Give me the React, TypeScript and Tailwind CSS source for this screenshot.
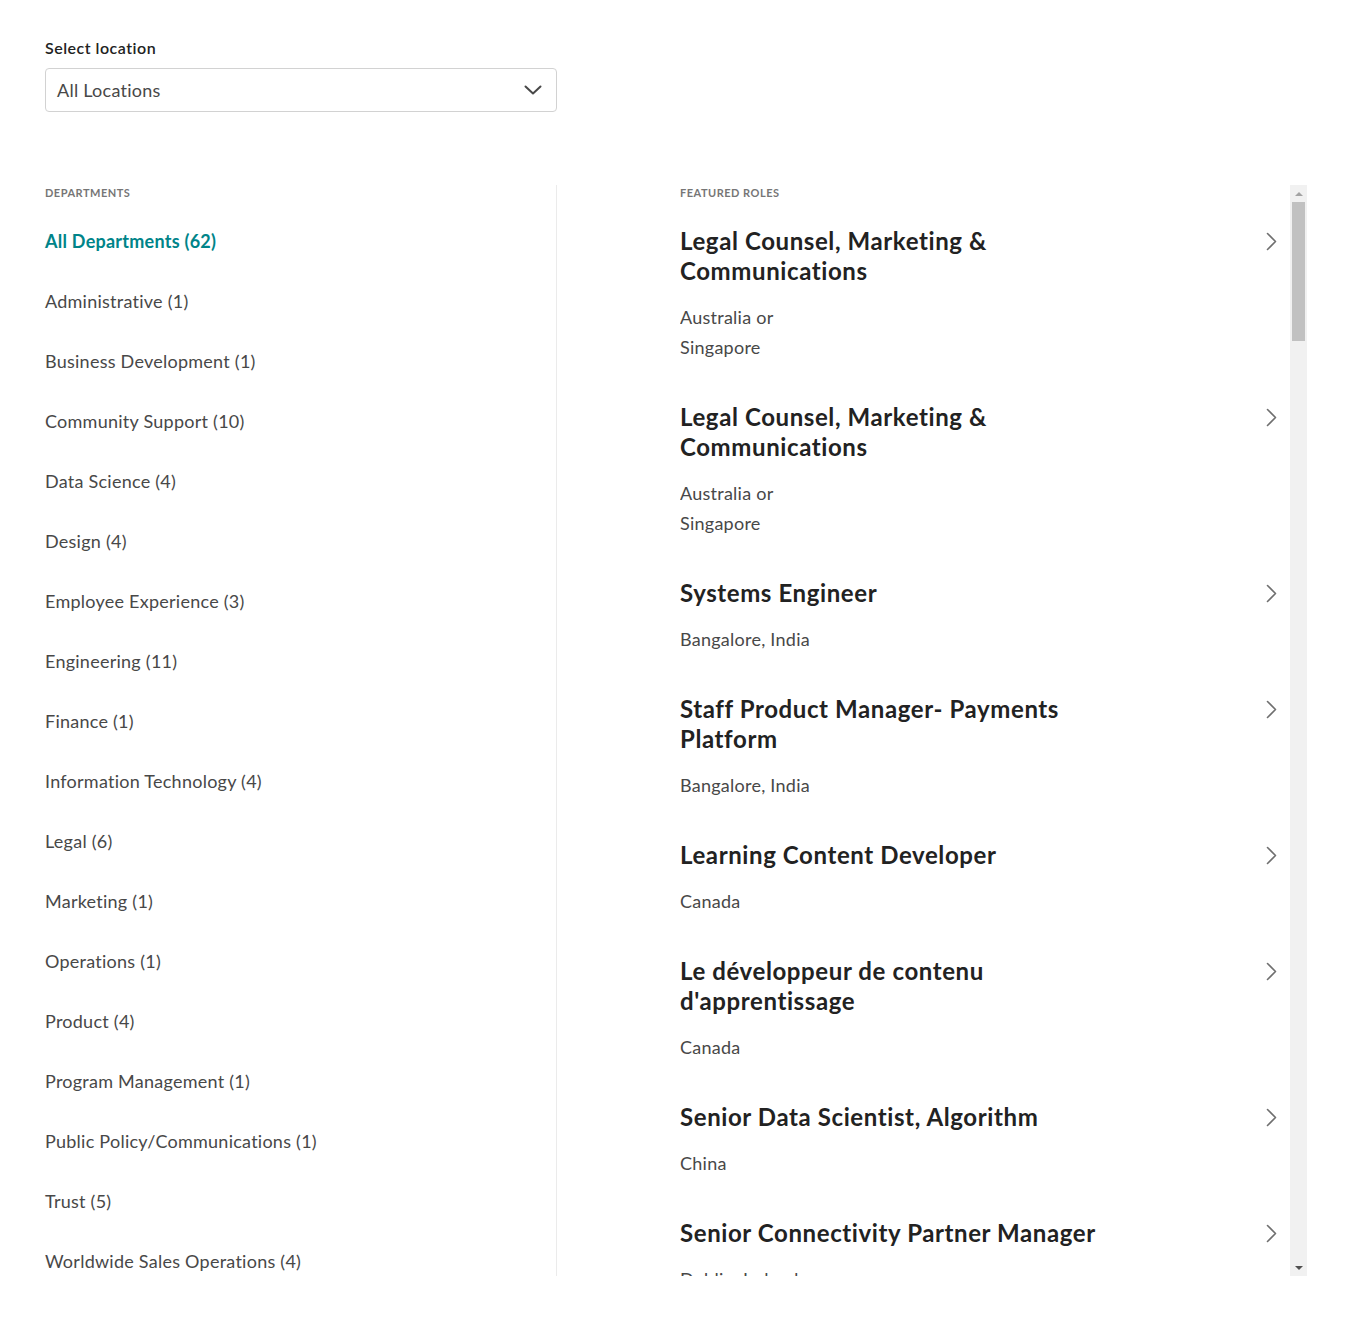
const departments = [
  { name: "All Departments", count: 62 },
  { name: "Administrative", count: 1 },
  { name: "Business Development", count: 1 },
  { name: "Community Support", count: 10 },
  { name: "Data Science", count: 4 },
  { name: "Design", count: 4 },
  { name: "Employee Experience", count: 3 },
  { name: "Engineering", count: 11 },
  { name: "Finance", count: 1 },
  { name: "Information Technology", count: 4 },
  { name: "Legal", count: 6 },
  { name: "Marketing", count: 1 },
  { name: "Operations", count: 1 },
  { name: "Product", count: 4 },
  { name: "Program Management", count: 1 },
  { name: "Public Policy/Communications", count: 1 },
  { name: "Trust", count: 5 },
  { name: "Worldwide Sales Operations", count: 4 },
];

const roles = [
  { title: "Legal Counsel, Marketing & Communications", location: "Australia or Singapore" },
  { title: "Legal Counsel, Marketing & Communications", location: "Australia or Singapore" },
  { title: "Systems Engineer", location: "Bangalore, India" },
  { title: "Staff Product Manager- Payments Platform", location: "Bangalore, India" },
  { title: "Learning Content Developer", location: "Canada" },
  { title: "Le développeur de contenu d'apprentissage", location: "Canada" },
  { title: "Senior Data Scientist, Algorithm", location: "China" },
  { title: "Senior Connectivity Partner Manager", location: "Dublin, Ireland or United Kingdom" },
  { title: "Product Designer", location: "London, United Kingdom" },
];

// thin chevrons drawn to match the site's own icons
const CaretDown = () => (
  <svg width="18" height="10" viewBox="0 0 18 10" fill="none" stroke="#484848" strokeWidth="2" strokeLinecap="round" strokeLinejoin="round">
    <polyline points="1.5,1.5 9,8.5 16.5,1.5" />
  </svg>
);

const CaretRight = () => (
  <svg width="11" height="19" viewBox="0 0 11 19" fill="none" stroke="#6f6f6f" strokeWidth="1.6" strokeLinecap="round" strokeLinejoin="round">
    <polyline points="1.5,1.5 9.5,9.5 1.5,17.5" />
  </svg>
);

const Scrollbar = () => (
  <div className="flex w-[17px] shrink-0 flex-col bg-[#f1f1f1]">
    <div className="flex h-[17px] items-center justify-center">
      <div className="h-0 w-0 border-x-[4px] border-b-[4px] border-x-transparent border-b-[#a3a3a3]" />
    </div>
    <div className="flex-1 px-[2px]">
      <div className="h-[139px] bg-[#c1c1c1]" />
    </div>
    <div className="flex h-[17px] items-center justify-center">
      <div className="h-0 w-0 border-x-[4px] border-t-[4px] border-x-transparent border-t-[#505050]" />
    </div>
  </div>
);

const App = () => {
  return (
    <div className="min-h-screen bg-white px-[45px] pt-[40px] font-['Lato',sans-serif] text-[#484848]">
      {/* LOCATION PICKER */}
      <div className="w-[512px]">
        <label className="block text-[16px] font-semibold leading-4 tracking-[0.5px] text-[#222]">Select location</label>
        <button className="mt-3 flex h-[44px] w-full items-center justify-between rounded border border-[#d2d2d2] pl-[11px] pr-[14px] text-[18px] tracking-[0.25px] text-[#484848]">
          <span>All Locations</span>
          <CaretDown />
        </button>
      </div>

      <div className="mt-[73px] flex h-[1091px] w-[1262px]">
        {/* DEPARTMENTS */}
        <div className="w-[512px] shrink-0 border-r border-[#ebebeb]">
          <p className="text-[11px] font-bold uppercase leading-4 tracking-[0.5px] text-[#767676]">Departments</p>
          <ul className="mt-[10px]">
            {departments.map((d, i) => (
              <li
                key={d.name}
                className={`flex h-[60px] items-center text-[18px] tracking-[0.25px] ${
                  i === 0 ? "font-bold text-[#008489]" : "text-[#484848]"
                }`}
              >
                {d.name} ({d.count})
              </li>
            ))}
          </ul>
        </div>

        {/* FEATURED ROLES */}
        <div className="ml-[123px] flex-1 overflow-hidden">
          <p className="text-[11px] font-bold uppercase leading-4 tracking-[0.5px] text-[#767676]">Featured Roles</p>
          <ul className="mt-[25px] space-y-10 pr-[13px]">
            {roles.map((r, i) => (
              <li key={i} className="flex items-start justify-between">
                <div>
                  <h3 className="max-w-[450px] text-[24px] font-bold leading-[30px] tracking-[0.6px] text-[#222]">{r.title}</h3>
                  <p className="mt-4 max-w-[150px] text-[18px] leading-[30px] tracking-[0.25px] text-[#484848]">{r.location}</p>
                </div>
                <div className="pt-[6px]">
                  <CaretRight />
                </div>
              </li>
            ))}
          </ul>
        </div>
        <Scrollbar />
      </div>
    </div>
  );
};

export default App;
